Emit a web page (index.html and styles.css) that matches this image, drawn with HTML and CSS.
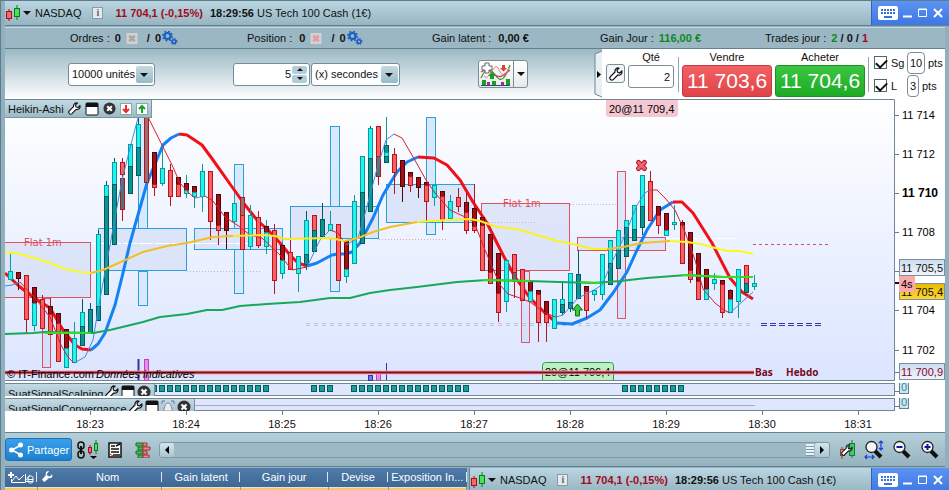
FILE: index.html
```
<!DOCTYPE html>
<html lang="fr">
<head>
  <meta charset="UTF-8" />
  <meta name="viewport" content="width=device-width, initial-scale=1.0"/>
  <title>NASDAQ - US Tech 100 Cash (1€)</title>
  <link rel="stylesheet" href="styles.css">
</head>
<body>
  <svg class="defs" width="0" height="0">
    <symbol id="candles" viewBox="0 0 17 17">
      <path d="M4 4v12" stroke="#a01018"/><rect x="1.5" y="6.500" width="5" height="7" fill="#f46a6a" stroke="#a01018"/>
      <path d="M12 0v15" stroke="#087a18"/><rect x="9.500" y="3.500" width="5" height="8" fill="#4ee05c" stroke="#087a18"/>
    </symbol>
    <symbol id="wrench" viewBox="0 0 14 14">
      <path d="M12.800 4 10.800 6 8.700 5.300 8 3.200 10 1.200C8 .4 5.600 2 6 5L1.200 9.800C0 11.500 2 14 4 12.800L8.800 8C11.500 8.500 13.600 6.300 12.800 4Z" fill="#fff" stroke="#111" stroke-width="1.200"/>
    </symbol>
    <symbol id="gears" viewBox="0 0 16 14">
      <circle cx="5.500" cy="5" r="3" fill="none" stroke="#1c5fc4" stroke-width="2.200"/>
      <circle cx="5.500" cy="5" r="4.600" fill="none" stroke="#1c5fc4" stroke-width="1.600" stroke-dasharray="1.800 1.800"/>
      <circle cx="12" cy="10.500" r="1.800" fill="none" stroke="#1c5fc4" stroke-width="1.500"/>
      <circle cx="12" cy="10.500" r="2.900" fill="none" stroke="#1c5fc4" stroke-width="1.200" stroke-dasharray="1.200 1.100"/>
    </symbol>
    <symbol id="cross" viewBox="0 0 12 12">
      <rect width="12" height="12" fill="#d2d2d0"/><path d="M3 3l6 6M9 3l-6 6" stroke="currentColor" stroke-width="3"/>
    </symbol>
    <symbol id="win" viewBox="0 0 14 14">
      <rect x="1" y="1" width="12" height="12" rx="1" fill="#fff" stroke="#111"/><path d="M1 1h12v4H1z" fill="#111"/>
    </symbol>
    <symbol id="close" viewBox="0 0 14 14">
      <circle cx="7" cy="7" r="6.500" fill="#333"/><path d="M4.500 4.500l5 5M9.500 4.500l-5 5" stroke="#fff" stroke-width="2.200"/>
    </symbol>
    <symbol id="keyboard" viewBox="0 0 20 14">
      <rect width="20" height="14" rx="2" fill="#fff"/>
      <path d="M3 4h14M3 7h14" stroke="#3c72dc" stroke-width="2" stroke-dasharray="2 1"/><path d="M6 11h8" stroke="#3c72dc" stroke-width="2"/>
    </symbol>
    <symbol id="lens" viewBox="0 0 20 20">
      <path d="M11 11l6 6" stroke="#111" stroke-width="4"/><circle cx="7.500" cy="7" r="5.500" fill="#f2f6f8" stroke="#222" stroke-width="1.300"/>
    </symbol>
  </svg>

  <div class="window">
    <header class="titlebar">
      <svg class="ic-candles"><use href="#candles"/></svg>
      <i class="caret"></i>
      <span class="name">NASDAQ</span>
      <button class="info" aria-label="Info">i</button>
      <b class="quote">11 704,1 (-0,15%)</b>
      <b class="clock">18:29:56</b>
      <span>US Tech 100 Cash (1€)</span>
      <div class="controls">
        <button aria-label="Clavier"><svg width="20" height="14"><use href="#keyboard"/></svg></button>
        <button aria-label="Réduire"><svg width="10" height="10"><path d="M0 8.500h9" stroke="#fff" stroke-width="2"/></svg></button>
        <button aria-label="Agrandir"><svg width="10" height="10"><path d="M.5 1h8v7.500h-8zM0 1.500h9" fill="none" stroke="#fff"/></svg></button>
        <button aria-label="Fermer"><svg width="10" height="10"><path d="M1 1l8 8M9 1L1 9" stroke="#fff" stroke-width="2"/></svg></button>
      </div>
    </header>

    <div class="status">
      <div class="stat"><span>Ordres :</span><b>0</b><svg class="x gray"><use href="#cross"/></svg><b>/</b><b>0</b><svg class="gears"><use href="#gears"/></svg></div>
      <div class="stat"><span class="wide">Position :</span><b>0</b><svg class="x pink"><use href="#cross"/></svg><b>/</b><b>0</b><svg class="gears"><use href="#gears"/></svg></div>
      <div class="stat"><span class="wide">Gain latent :</span><b>0,00 €</b></div>
      <div class="stat"><span>Gain Jour :</span><b class="green">116,00 €</b></div>
      <div class="stat"><span>Trades jour :</span><b><b class="green">2</b> / 0 / <b class="red">1</b></b></div>
    </div>

    <div class="toolbar">
      <div class="settings">
        <div class="select units"><select aria-label="Unités"><option>10000 unités</option></select></div>
        <div class="pair">
          <div class="spin">
            <input type="text" value="5" aria-label="Période">
            <div class="steps"><button aria-label="Plus"><i class="up"></i></button><button aria-label="Moins"><i class="down"></i></button></div>
          </div>
          <div class="select secs"><select aria-label="Intervalle"><option>(x) secondes</option></select></div>
        </div>
        <button class="indicators" aria-label="Indicateurs">
          <svg width="34" height="26" viewBox="0 0 34 26">
            <path d="M2 17C8 4 12 8 17 15S26 18 31 4" fill="none" stroke="#1a9a28" stroke-width="1.200"/>
            <path d="M2 11C9 6 12 12 16 14C21 18 25 14 31 9" fill="none" stroke="#d83848" stroke-width="1.200"/>
            <path d="M5 15C10 22 15 0 19 7S25 20 30 7" fill="none" stroke="#e77884"/>
            <path d="M6 2h4v3h3v4h-3v3H6V9H3V5h3z" fill="#fff" stroke="#667"/>
            <path d="M23 4h3v3h2l-3.500 3.500L21 7h2z" fill="#e23b3b"/><path d="M11 18v-3H9l4-4 4 4h-2v3z" fill="#14a020"/>
            <path d="M3 19h4v5H3zM13 20h4v4h-4zM27 18h4v6h-4z" fill="#14a020"/><path d="M8 21h3v3H8zM22 21h3v3h-3z" fill="#c02080"/><path d="M2 24.500h29" stroke="#28468c"/>
          </svg>
          <span class="drop"><i class="caret"></i></span>
        </button>
      </div>

      <div class="order">
        <svg class="handle" width="8" height="48"><path d="M8 1L1 4v40l7 3" fill="#e8f0f4" stroke="#6c8794"/><path d="M3 21v7l4-3.500z"/></svg>
        <button class="tool" aria-label="Réglages"><svg width="14" height="14"><use href="#wrench"/></svg></button>
        <div class="field"><label for="qty">Qté</label><input id="qty" type="text" value="2"></div>
        <div class="deal first"><span>Vendre</span><button class="sell">11 703,6</button></div>
        <div class="deal"><span>Acheter</span><button class="buy">11 704,6</button></div>
        <div class="limits">
          <div><input type="checkbox" id="sg" checked><label for="sg">Sg</label><input type="text" value="10" class="two" aria-label="Points Sg"><span>pts</span></div>
          <div><input type="checkbox" id="l" checked><label for="l">L</label><input type="text" value="3" class="one" aria-label="Points L"><span>pts</span></div>
        </div>
      </div>
    </div>

    <main class="charts">
      <div class="price">
        <svg id="chart" viewBox="5 99 940 283">
          <defs>
            <linearGradient id="sky" x1="0" y1="0" x2="0" y2="1"><stop offset="0" stop-color="#fff"/><stop offset="1" stop-color="#dbe5ff"/></linearGradient>
            <linearGradient id="gold" x1="0" y1="0" x2="0" y2="1"><stop offset="0" stop-color="#e9b800"/><stop offset="1" stop-color="#ffd83a"/></linearGradient>
            <linearGradient id="tag" x1="0" y1="0" x2="0" y2="1"><stop offset="0" stop-color="#ccdcf0"/><stop offset="1" stop-color="#f0f5fc"/></linearGradient>
          </defs>
          <rect x="5" y="99" width="889" height="281" fill="url(#sky)"/>
          <path d="M5 99.500H894.500V380.500H5" fill="none" stroke="#6f8794"/>
          <g id="plot"></g>
          <g id="axis"></g>
        </svg>
        <div class="tab main">
          <span>Heikin-Ashi</span>
          <svg width="13" height="13"><use href="#wrench"/></svg>
          <svg width="14" height="14"><use href="#win"/></svg>
          <svg width="13" height="13"><use href="#close"/></svg>
          <svg width="12" height="12"><rect x=".5" y=".5" width="11" height="11" fill="#fff" stroke="#8aa"/><path d="M6 2v7M3 6l3 3 3-3" fill="none" stroke="#e03030" stroke-width="2"/></svg>
          <svg width="12" height="12"><rect x=".5" y=".5" width="11" height="11" fill="#fff" stroke="#8aa"/><path d="M6 10V3M3 6l3-3 3 3" fill="none" stroke="#18a028" stroke-width="2"/></svg>
        </div>
      </div>
      <div class="signal">
        <svg id="scalping" viewBox="5 383 940 13"></svg>
        <div class="tab">
          <span>SuatSignalScalping</span>
          <svg width="14" height="14"><use href="#wrench"/></svg>
          <svg width="14" height="14"><use href="#win"/></svg>
          <svg width="14" height="14"><use href="#close"/></svg>
        </div>
      </div>
      <div class="signal">
        <svg id="convergence" viewBox="5 398 940 13"></svg>
        <div class="tab">
          <span>SuatSignalConvergance</span>
          <svg width="14" height="14"><use href="#wrench"/></svg>
          <svg width="14" height="14"><use href="#win"/></svg>
          <svg width="14" height="14"><path d="M2 11c2-1 1-8 5-8s3 7 5 8z" fill="#e8eef2" stroke="#889"/><path d="M1 4V1h3M10 1h3v3" fill="none" stroke="#67a"/><path d="M5 12h4" stroke="#c44" stroke-width="2"/></svg>
          <svg width="14" height="14"><use href="#close"/></svg>
        </div>
      </div>
      <div class="times">
        <span>18:23</span><span>18:24</span><span>18:25</span><span>18:26</span><span>18:27</span><span>18:28</span><span>18:29</span><span>18:30</span><span>18:31</span>
      </div>
    </main>

    <div class="footer">
      <button class="share"><svg width="16" height="16"><path d="M13 3L4 8l9 5" fill="none" stroke="#fff" stroke-width="1.500"/><circle cx="12.500" cy="3" r="2.500" fill="#fff"/><circle cx="3.500" cy="8" r="2.500" fill="#fff"/><circle cx="12.500" cy="13" r="2.500" fill="#fff"/></svg>Partager</button>
      <svg width="24" height="20" viewBox="0 0 24 20">
        <g fill="none" stroke="#111"><rect x="2" y="2" width="6" height="7" rx="3" stroke-width="1.500"/><rect x="2" y="11" width="6" height="7" rx="3" stroke-width="1.500"/><path d="M5 6v8" stroke-width="2"/></g>
        <path d="M14 5v10" stroke="#a01018"/><rect x="12.500" y="7.500" width="3" height="5" fill="#f46a6a" stroke="#a01018"/>
        <path d="M20 0v14" stroke="#087a18"/><rect x="18.500" y="3.500" width="3" height="7" fill="#4ee05c" stroke="#087a18"/><path d="M14 16h7l-3.500 3z"/>
      </svg>
      <svg width="14" height="16"><rect x="1" y="1" width="12" height="14" fill="#fff" stroke="#111" stroke-width="1.500"/><path d="M3 4h4M8 4l4-2M3 7h8M3 10h8M5 13h7" stroke="#111" stroke-width="1.600"/><path d="M2 12l3 2" stroke="#c22"/></svg>
      <svg class="book" width="16" height="16"><path d="M1 1h7v3H1zM3 5h5v3H3zM1 9h7v3H1zM3 13h5v3H3z" fill="#50b858" stroke="#1f6f28"/><path d="M8 1h4v3H8zM8 5h7v3H8zM8 9h4v3H8zM8 13h6v3H8z" fill="#f08a8a" stroke="#a03038"/></svg>
      <div class="scroll">
        <button class="left" aria-label="Gauche"><svg width="6" height="8"><path d="M5 0v8L1 4z"/></svg></button>
        <span class="grip"></span>
        <button class="right" aria-label="Droite"><svg width="6" height="8"><path d="M1 0v8l4-4z"/></svg></button>
      </div>
      <svg width="17" height="19" viewBox="0 0 17 19"><path d="M3 7v12" stroke="#843"/><rect x="1.500" y="9.500" width="4" height="6" fill="#e99" stroke="#843"/><path d="M13 0v18" stroke="#175"/><rect x="10.500" y="3.500" width="5" height="12" fill="#4c5" stroke="#175"/><use href="#wrench" x="2" y="4" width="12" height="12"/></svg>
      <svg width="20" height="20"><use href="#lens"/><path d="M17 1v9M15 3l2-2 2 2M15 8l2 2 2-2M1 17h9M3 15l-2 2 2 2M8 15l2 2-2 2" fill="none" stroke="#1440e0" stroke-width="1.200"/></svg>
      <svg width="20" height="20"><use href="#lens"/><path d="M4.500 7h6" stroke="#1414a0" stroke-width="2"/></svg>
      <svg width="20" height="20"><use href="#lens"/><path d="M4.500 7h6M7.500 4v6" stroke="#1414a0" stroke-width="2"/></svg>
    </div>

    <div class="bottom">
      <table class="positions">
        <thead>
          <tr>
            <th class="c-ico"><svg width="26" height="12"><path d="M3 0v6M0 3h6" stroke="#fff" stroke-width="2"/><path d="M3.500 7v3.500h14V2M4 9l4-5 3 4 5-5M17 9l5-6" fill="none" stroke="#fff"/><path d="M20 5.500c0-2 5-2 5 0v4c0 2-5 2-5 0zM20 7.500h5M18 9.500h7" fill="none" stroke="#fff"/></svg></th>
            <th class="c-nom"><svg width="11" height="11" viewBox="0 0 14 14"><path d="M13 4l-3 3-3-1-1-2 3-4C6 0 4 2 5 5L0 11l3 3 6-5c3 1 5-2 4-5z" fill="#fff"/></svg>Nom</th>
            <th class="c-lat">Gain latent</th><th class="c-jour">Gain jour</th><th class="c-dev">Devise</th><th class="c-expo">Exposition In...</th>
          </tr>
        </thead>
        <tbody><tr><td></td><td></td><td></td><td></td><td></td><td></td></tr></tbody>
      </table>
      <header class="titlebar second">
        <svg class="ic-candles"><use href="#candles"/></svg>
        <i class="caret"></i>
        <span class="name">NASDAQ</span>
        <button class="info" aria-label="Info">i</button>
        <b class="quote">11 704,1 (-0,15%)</b>
        <b class="clock">18:29:56</b>
        <span>US Tech 100 Cash (1€)</span>
        <div class="controls">
          <button aria-label="Clavier"><svg width="20" height="14"><use href="#keyboard"/></svg></button>
          <button aria-label="Réduire"><svg width="10" height="10"><path d="M0 8.500h9" stroke="#fff" stroke-width="2"/></svg></button>
          <button aria-label="Agrandir"><svg width="10" height="10"><path d="M.5 1h8v7.500h-8zM0 1.500h9" fill="none" stroke="#fff"/></svg></button>
          <button aria-label="Fermer"><svg width="10" height="10"><path d="M1 1l8 8M9 1L1 9" stroke="#fff" stroke-width="2"/></svg></button>
        </div>
      </header>
    </div>
  </div>

  <script src="chart.js"></script>
</body>
</html>
```
FILE: styles.css
```
* {
  box-sizing: border-box;
}

body {
  margin: 0;
  height: 100vh;
  overflow: hidden;
  background-color: #90b0be;
  font-family: "Liberation Sans", Arial, sans-serif;
  font-size: 11px;
  line-height: 14px;
  color: #111;
}

button,
input,
select {
  font: inherit;
  color: inherit;
  margin: 0;
  padding: 0;
}

svg {
  display: block;
  flex: none;
}

.defs {
  position: absolute;
}

.window {
  border-top: 1px solid #5e7d8b;
  border-left: 1px solid #5e7d8b;
  padding: 0 4px;
}

.titlebar {
  display: flex;
  align-items: center;
  height: 25px;
  margin-right: -4px;
  background: linear-gradient(#b9d6e2, #97b5c1);
  border-bottom: 1px solid #65818e;
  white-space: nowrap;
}

.ic-candles {
  width: 17px;
  height: 17px;
  margin-right: 1px;
}

.caret {
  width: 0;
  height: 0;
  border: 4px solid transparent;
  border-top: 4px solid #111;
  border-bottom: 0;
}

.name {
  margin-left: 4px;
}

.info {
  width: 11px;
  height: 12px;
  margin: 0 12px 0 11px;
  border: 1px solid #8a9ba3;
  background-color: #e4e9eb;
  font: bold 10px/10px "Liberation Serif", serif;
  color: #667;
}

.quote {
  color: #a00a1e;
  margin-right: 7px;
}

.clock {
  margin-right: 3px;
}

.controls {
  display: flex;
  align-items: center;
  gap: 5px;
  align-self: stretch;
  margin-left: auto;
  width: 78px;
  padding-left: 6px;
  background: linear-gradient(#5b93f2, #3f77e4);
  border-left: 1px solid #3560b8;
}

.controls button {
  border: none;
  background: none;
}

.status {
  display: grid;
  grid-template-columns: 177fr 185fr 168fr 165fr 180fr;
  align-items: center;
  height: 22px;
  margin-top: 1px;
  padding-left: 65px;
  background-color: #9ab7c3;
  border-top: 1px solid #c4dae2;
  border-bottom: 1px solid #65818e;
}

.stat {
  display: flex;
  align-items: center;
  gap: 5px;
}

.stat .wide {
  margin-right: 2px;
}

.x {
  width: 12px;
  height: 11px;
  margin-right: 4px;
}

.x.gray {
  color: #a9a9a9;
}

.x.pink {
  color: #e59ca6;
}

.gears {
  width: 16px;
  height: 14px;
  margin-left: -4px;
}

.green {
  color: #0a8a1c;
}

.red {
  color: #a00a1e;
}

.toolbar {
  display: flex;
  align-items: center;
  justify-content: space-between;
  height: 50px;
  padding-left: 63px;
  background: linear-gradient(#9cb9c5, #fff);
}

.settings {
  display: flex;
  align-items: center;
  gap: 78px;
}

.select {
  position: relative;
  height: 23px;
}

.units {
  width: 87px;
}

.secs {
  width: 89px;
}

.select select {
  appearance: none;
  width: 100%;
  height: 100%;
  padding: 0 3px;
  border: 1px solid #6f8d9b;
  border-radius: 3px;
  background-color: #fff;
}

.select::before {
  content: "";
  position: absolute;
  right: 2px;
  top: 3px;
  width: 17px;
  height: 17px;
  border-radius: 2px;
  background: linear-gradient(#c4d9e2, #98bac8);
  pointer-events: none;
}

.select::after {
  content: "";
  position: absolute;
  right: 7px;
  top: 10px;
  border: 4px solid transparent;
  border-top: 4px solid #111;
  border-bottom: 0;
  pointer-events: none;
}

.pair {
  display: flex;
  gap: 1px;
}

.spin {
  display: flex;
  width: 77px;
  height: 23px;
  padding: 2px;
  border: 1px solid #6f8d9b;
  border-radius: 3px;
  background-color: #fff;
}

.spin input {
  flex: 1;
  min-width: 0;
  border: none;
  background: none;
  text-align: right;
}

.steps {
  display: flex;
  flex-direction: column;
  gap: 1px;
  width: 15px;
  margin-left: 1px;
}

.steps button {
  flex: 1;
  display: flex;
  align-items: center;
  justify-content: center;
  border: none;
  border-radius: 2px;
  background-color: #b2cdd8;
}

.up,
.down {
  border: 3px solid transparent;
}

.up {
  border-bottom-color: #111;
  border-top: 0;
}

.down {
  border-top-color: #111;
  border-bottom: 0;
}

.indicators {
  display: flex;
  width: 50px;
  height: 28px;
  border: 1px solid #7b8e97;
  border-radius: 3px;
  background: linear-gradient(#fff, #e6eaec);
}

.drop {
  display: flex;
  align-items: center;
  justify-content: center;
  flex: 1;
  height: 100%;
  border-left: 1px solid #7b8e97;
}

.order {
  display: flex;
  align-items: flex-start;
  align-self: stretch;
  flex: none;
  width: 351px;
  padding-top: 1px;
  background: linear-gradient(90deg, transparent 8px, #fff 8px);
}

.tool {
  display: flex;
  align-items: center;
  justify-content: center;
  width: 19px;
  height: 19px;
  margin: 14px 3px 0 4px;
  border: 1px solid #7b8e97;
  border-radius: 3px;
  background-color: #f2f4f5;
}

.field,
.deal {
  display: flex;
  flex-direction: column;
  align-items: center;
  gap: 1px;
}

.field input {
  width: 46px;
  height: 23px;
  padding-right: 3px;
  border: 1px solid #7b8e97;
  border-radius: 3px;
  text-align: right;
}

.deal {
  margin-left: 3px;
}

.deal.first {
  margin-left: 8px;
  position: relative;
}

.deal.first::before {
  content: "";
  position: absolute;
  left: -4px;
  top: 7px;
  height: 35px;
  border-left: 1px solid #90a5b0;
}

.deal button {
  width: 90px;
  height: 32px;
  border-radius: 3px;
  font-size: 21px;
  color: #fff;
  white-space: nowrap;
}

.sell {
  border: 1px solid #c23c40;
  background: linear-gradient(#f26165, #df4448);
}

.buy {
  border: 1px solid #1c8f28;
  background: linear-gradient(#3cc540, #1dab26);
}

.limits {
  margin: 7px 0 0 3px;
  padding-left: 5px;
  height: 35px;
  border-left: 1px solid #90a5b0;
}

.limits div {
  display: flex;
  align-items: center;
  height: 23px;
  margin-top: -6px;
  white-space: nowrap;
}

.limits div + div {
  margin-top: 0;
}

.limits label {
  width: 16px;
  margin-left: 4px;
}

.limits input[type="checkbox"] {
  appearance: none;
  width: 13px;
  height: 13px;
  border: 1px solid #4f6570;
  background-color: #fff;
}

.limits input[type="checkbox"]:checked::before {
  content: "";
  display: block;
  width: 9px;
  height: 5px;
  margin: 2px 1px;
  border-left: 2px solid #111;
  border-bottom: 2px solid #111;
  transform: rotate(-45deg);
}

.limits input[type="text"] {
  height: 22px;
  margin-right: 3px;
  border: 1px solid #7b8e97;
  border-radius: 4px;
  text-align: center;
}

.two {
  width: 18px;
}

.one {
  width: 12px;
}

.charts {
  background-color: #fff;
}

.price,
.signal {
  position: relative;
  overflow: hidden;
}

.price svg#chart,
.signal > svg {
  width: 100%;
  height: auto;
}

.signal {
  margin-top: 1px;
}

.signal + .signal {
  margin-top: 2px;
}

.tab {
  position: absolute;
  left: 0;
  top: 1px;
  display: flex;
  gap: 3px;
  height: 18px;
  padding: 1px 3px;
  background: linear-gradient(#c2dae3, #9dbac6);
  border-right: 1px solid #7894a1;
  white-space: nowrap;
}

.signal .tab {
  gap: 2px;
}

.tab span {
  padding-top: 2px;
}

.tab.main {
  align-items: center;
  gap: 4px;
  border-bottom: 1px solid #7894a1;
}

.tab.main span {
  padding: 0;
}

.times {
  display: grid;
  grid-template-columns: repeat(9, 96fr) 39fr;
  height: 22px;
  padding-left: 37px;
  border-bottom: 1px solid #65818e;
  text-align: center;
}

.times span::before {
  content: "";
  display: block;
  width: 1px;
  height: 4px;
  margin: 0 auto 2px;
  background-color: #65818e;
}

.footer {
  display: flex;
  align-items: center;
  gap: 8px;
  height: 34px;
  padding: 0 5px 0 0;
  background: linear-gradient(#b6d0da, #94b2be);
  border-bottom: 1px solid #65818e;
}

.share {
  display: flex;
  align-items: center;
  gap: 3px;
  width: 67px;
  height: 23px;
  padding-left: 2px;
  margin-right: -4px;
  border: 1px solid #1b70b8;
  border-radius: 3px;
  background: linear-gradient(#3ba0e8, #1c80d0);
  color: #fff;
}

.book {
  margin-left: 5px;
}

.scroll {
  display: flex;
  flex: 1;
  height: 16px;
  margin-right: 1px;
  border: 1px solid #7c99a6;
  border-radius: 3px;
  background-color: #9cb9c5;
}

.scroll button {
  display: flex;
  align-items: center;
  justify-content: center;
  width: 14px;
  border: none;
  border-radius: 2px;
  background: linear-gradient(#d5e5ec, #a9c6d2);
}

.grip {
  width: 8px;
  margin: 1px 1px 1px auto;
  background: repeating-linear-gradient(#e9f3f7 0 2px, #7c99a6 2px 3px);
}

.bottom {
  display: grid;
  grid-template-columns: 462fr 476fr;
  align-items: start;
  gap: 2px;
  margin-top: 1px;
}

.positions {
  border-collapse: collapse;
  table-layout: fixed;
  width: 100%;
  color: #fff;
}

.positions th {
  height: 19px;
  padding: 0;
  font-weight: normal;
  white-space: nowrap;
  background: linear-gradient(90deg, transparent calc(100% - 1px), #dce8f2 0) no-repeat 0 4px / 100% 10px, linear-gradient(#4f7bab, #3f6792);
}

.positions th svg {
  float: left;
  margin: 1px 0 0 5px;
}

.positions .c-ico svg {
  margin-left: 3px;
}

.positions td {
  height: 20px;
  background-color: #fbc46a;
  border-right: 1px solid #8b9aa0;
  border-top: 1px solid #dbe4e8;
}

.c-ico {
  width: 7%;
}

.c-nom {
  width: 27%;
}

.c-lat {
  width: 17%;
}

.c-jour {
  width: 19%;
}

.c-dev {
  width: 13%;
}

.titlebar.second {
  border-left: 1px solid #65818e;
}
```
FILE: chart.js
```
const plot = document.getElementById("plot");
const axis = document.getElementById("axis");

const colors = {
  c: ["#20f4f0", "#0a9a9c"],
  t: ["#0b9494", "#06585c"],
  r: ["#fb6060", "#b51420"],
  d: ["#a80c14", "#4c0508"],
  g: ["#9b6c70", "#b51420"],
  k: ["#4f7474", "#b51420"]
};

function add(parent, tag, attrs, text) {
  const el = document.createElementNS("http://www.w3.org/2000/svg", tag);
  for (const key in attrs) el.setAttribute(key, attrs[key]);
  if (text) el.textContent = text;
  parent.appendChild(el);
  return el;
}

function line(points, stroke, width, dash) {
  add(plot, "polyline", { points, fill: "none", stroke, "stroke-width": width, "stroke-linejoin": "round", "stroke-dasharray": dash || "none" });
}

function box(x1, y1, x2, y2, stroke, fill) {
  add(plot, "rect", { x: x1 + 0.5, y: y1 + 0.5, width: x2 - x1, height: y2 - y1, stroke, fill });
}

// zones: left, top, right, bottom
const blue = "#28a0d8";
const red = "#dc5464";
[[138, 112, 147, 228], [138, 271, 147, 305], [234, 164, 243, 228], [234, 249, 243, 293], [330, 126, 339, 206],
 [330, 238, 339, 291], [426, 117, 435, 234]].forEach(b => box(...b, blue, "#d9e8fc"));
[[98, 228, 186, 270], [194, 228, 282, 249], [290, 206, 378, 238], [386, 184, 474, 222]].forEach(b => box(...b, blue, "#dce4fa"));
[[4, 242, 90, 297], [481, 203, 569, 270], [577, 237, 665, 250], [617, 171, 625, 318], [42, 298, 50, 367], [521, 271, 529, 342]]
  .forEach(b => box(...b, red, "rgba(205,215,246,0.5)"));

// dotted levels
line("187,271.5 262,271.5", "#b4b8d4", 1, "1 2");
line("91,243.500 283,243.500", "#fff", 1, "14 2");
line("379,239.500 446,239.500", "#e0a0c8", 1, "1 2");
line("474,222.500 535,222.500", "#c0bcd8", 1, "1 2");
line("570,204.500 617,204.500", "#c0bcd8", 1, "1 2");
line("666,238.500 735,238.500", "#fff", 1, "10 2");
line("306,323.500 753,323.500", "#c5c0d8", 1, "4 4");
line("306,325.500 753,325.500", "#c5c0d8", 1, "4 4");
line("761,323.500 822,323.500", "#3434b4", 1, "6 3");
line("761,325.500 822,325.500", "#3434b4", 1, "6 3");
line("753,244.500 828,244.500", "#d05070", 1, "3 3");

// x, wick top, wick bottom, then body: top, colour, bottom [, colour, bottom]
const candles = [
  [10, 253, 279, 271, "c", 279], [18, 272, 290, 272, "d", 278], [26, 275, 333, 275, "r", 319],
  [34, 287, 331, 287, "d", 303, "c", 325], [42, 295, 328, 299, "r", 328], [50, 298, 334, 306, "d", 314, "r", 334],
  [58, 313, 361, 313, "d", 323, "r", 361], [66, 329, 367, 329, "d", 348, "c", 367], [74, 322, 362, 338, "c", 362],
  [82, 299, 345, 312, "c", 326, "t", 345], [90, 303, 333, 309, "t", 333], [98, 230, 320, 234, "c", 306, "t", 320],
  [106, 181, 294, 185, "c", 196, "t", 294], [114, 158, 244, 162, "c", 184, "t", 244], [122, 158, 178, 162, "r", 174],
  [122, 178, 221, 178, "k", 209], [130, 144, 193, 144, "c", 166, "t", 193], [138, 118, 175, 124, "c", 147, "t", 175],
  [146, 110, 182, 112, "g", 182], [154, 152, 196, 152, "d", 184, "r", 187], [162, 147, 186, 168, "c", 183],
  [170, 164, 206, 170, "r", 196], [178, 177, 196, 177, "d", 184, "r", 196], [186, 175, 198, 183, "d", 190, "c", 193],
  [194, 186, 208, 186, "d", 192, "c", 196], [202, 164, 212, 171, "c", 196], [210, 171, 240, 171, "r", 221],
  [218, 194, 245, 194, "d", 225, "r", 230], [226, 212, 249, 212, "d", 230], [234, 203, 221, 203, "c", 221],
  [242, 197, 249, 197, "g", 215, "r", 249], [250, 205, 250, 215, "c", 246], [258, 211, 248, 217, "r", 245],
  [266, 220, 254, 226, "d", 232, "c", 246], [274, 224, 294, 230, "r", 280], [282, 245, 279, 245, "d", 260, "c", 273],
  [290, 240, 269, 252, "r", 269], [298, 256, 292, 256, "c", 273], [306, 211, 270, 220, "c", 254, "t", 264],
  [314, 215, 251, 215, "r", 230, "t", 251], [322, 203, 236, 219, "t", 236], [330, 211, 230, 224, "c", 230],
  [338, 224, 280, 224, "r", 280], [346, 241, 283, 241, "d", 269, "c", 276], [354, 195, 263, 201, "c", 263],
  [362, 156, 243, 156, "c", 192, "t", 243], [370, 126, 211, 128, "c", 158, "t", 211], [378, 126, 185, 126, "r", 156, "k", 176],
  [386, 117, 162, 145, "t", 152, "c", 156], [386, 156, 162, 156, "t", 162], [394, 148, 194, 154, "r", 172],
  [402, 160, 202, 160, "d", 186], [410, 172, 192, 172, "d", 176, "r", 185], [418, 177, 198, 177, "d", 187],
  [426, 182, 222, 182, "d", 185, "r", 201], [434, 185, 206, 185, "c", 197], [442, 191, 230, 191, "d", 196, "r", 220],
  [450, 195, 218, 201, "c", 218], [458, 188, 212, 197, "r", 206], [466, 192, 234, 202, "d", 212, "r", 230],
  [474, 184, 233, 208, "d", 226, "r", 230], [482, 217, 270, 217, "d", 225, "r", 270], [490, 234, 283, 234, "d", 272, "r", 283],
  [498, 253, 322, 253, "d", 293, "r", 312], [506, 260, 312, 260, "c", 301], [514, 254, 298, 254, "r", 272, "k", 281],
  [522, 269, 300, 269, "r", 300], [530, 281, 301, 281, "d", 291, "c", 301], [538, 290, 342, 290, "d", 294, "r", 322],
  [546, 301, 342, 301, "d", 314, "r", 322], [554, 299, 328, 299, "c", 328], [562, 281, 315, 299, "c", 304, "t", 312],
  [570, 273, 312, 273, "c", 302, "t", 308], [578, 250, 298, 274, "t", 298], [586, 286, 318, 286, "d", 291, "r", 310],
  [594, 290, 301, 290, "c", 294], [602, 254, 300, 254, "c", 294], [610, 240, 284, 240, "c", 263, "t", 284],
  [618, 230, 268, 230, "c", 250, "t", 268], [626, 220, 256, 220, "c", 227, "t", 256], [634, 205, 240, 205, "c", 229, "t", 240],
  [642, 175, 235, 175, "c", 206, "t", 227], [650, 171, 220, 181, "r", 220], [658, 206, 234, 206, "d", 215, "r", 225],
  [666, 213, 235, 213, "d", 230, "c", 235], [674, 205, 230, 222, "c", 224], [682, 220, 263, 222, "d", 225, "r", 263],
  [690, 232, 283, 232, "d", 270, "r", 279], [698, 253, 299, 253, "d", 281, "r", 299], [706, 269, 299, 269, "d", 289, "c", 299],
  [714, 273, 290, 279, "c", 283], [722, 280, 318, 280, "d", 284, "r", 312], [730, 289, 312, 290, "d", 299, "c", 312],
  [738, 269, 318, 269, "c", 301], [746, 265, 292, 265, "r", 283, "t", 292], [754, 275, 290, 283, "c", 286]
];

// thick average
line("5,273 20,287 33,297 50,308 63,330 75,345 82,349 91,350", "#f01018", 3);
line("91,350 98,344 105,333 115,305 123,273 130,243 147,183 163,145 171,138 179,134", "#1482f4", 3);
line("179,134 187,135 202,145 213,160 230,184 245,205 257,220 268,230 280,243 290,255 298,263 307,266", "#f01018", 3);
line("307,266 317,263 332,255 338,254 345,254 352,252 360,243 373,218 383,195 397,172 407,162 418,157", "#1482f4", 3);
line("418,157 434,158 447,165 460,180 473,202 487,223 503,255 515,277 530,298 547,315 556,322", "#f01018", 3);
line("556,323 572,324 587,318 600,310 613,293 627,272 637,250 647,230 660,210 673,202", "#1482f4", 3);
line("673,202 682,202 693,213 712,243 730,278 742,292 753,299", "#f01018", 3);

candles.forEach(([x, high, low, top, ...parts]) => {
  const main = parts[parts.length - 2];
  add(plot, "path", { d: `M${x + 0.5} ${high}V${low}`, stroke: colors[main][1] });
  for (let i = 0; i < parts.length; i += 2) {
    const [fill, stroke] = colors[parts[i]];
    add(plot, "rect", { x: x - 1.5, y: top + 0.5, width: 4, height: Math.max(parts[i + 1] - top, 1), fill, stroke });
    top = parts[i + 1];
  }
});

// fast average
const up = "#3c8ce0";
const down = "#d8202c";
line("5,286 12,285 20,282", up, 1);
line("20,282 34,297 50,317 61,345 68,357 74,363", down, 1);
line("74,363 85,357 93,340 98,310 110,245 122,180 130,148 138,118", up, 1);
line("148,117 162,145 172,165 180,183 190,194 195,198", down, 1);
line("195,198 205,196", up, 1);
line("205,196 213,201 225,217 240,227 250,235 262,238 280,255 292,270 307,267", down, 1);
line("307,267 320,240 330,230", up, 1);
line("330,230 338,233 346,245", down, 1);
line("346,245 358,238 366,210 378,165 386,140 394,134", up, 1);
line("394,134 402,138 412,155 426,180 435,193 450,210 463,216 474,222 485,250 500,285 508,294 520,298 530,302 545,313 556,317", down, 1);
line("556,317 563,315 578,298 594,290 602,285 612,262 625,235 637,205 645,193 650,190", up, 1);
line("650,190 657,190 665,198 675,210 685,232 695,260 703,289 715,303 724,310 730,313", down, 1);
line("730,313 742,302 753,292", up, 1);

// slow averages
line("5,334 33,333 45,332 93,333 110,330 143,322 160,317 187,314 207,310 222,310 240,306 267,304 300,302 330,298 350,298 370,293 390,290 417,287 457,282 487,280 527,281 560,282 593,283 620,281 647,278 687,275 723,277 753,277", "#18a858", 2);
["45,333 91,333", "483,280 530,281", "580,282 600,283", "682,275 723,277 753,277"].forEach(p => line(p, "#30e020", 2));
line("5,252 20,254 35,258 50,263 65,269 80,272 91,273", "#fafa20", 2);
line("91,273 103,270 123,261 143,252 167,246 187,243 213,237 233,236", "#f4be28", 2);
line("233,236 263,235 275,236 285,239 330,238 345,241", "#f8e822", 2);
line("345,241 358,238 373,232 390,227 417,222", "#f4be28", 2);
line("417,222 447,220 470,219 480,221 497,227 517,229 530,233 557,241 573,244 593,249 607,249", "#f8f420", 2);
line("607,249 623,247 642,243 670,241", "#f4be28", 2);
line("670,241 687,242 700,244 727,251 740,251 753,254", "#fafa20", 2);

// volume bars at the bottom
[[370, 375, "#7478f0", "#3434a0"], [378, 373, "#f088f0", "#b04ab0"], [146, 359, "#f088f0", "#b04ab0"]].forEach(([x, y, fill, stroke]) =>
  add(plot, "rect", { x: x - 1.5, y: y + 0.5, width: 4, height: 380 - y, fill, stroke }));
line("138.5,359 138.5,380", "#3434a0", 2);
line("386.5,363 386.5,380", "#3434a0", 1);

// order tags
add(plot, "path", { d: "M606 100H678V114Q678 117 675 117H609Q606 117 606 114Z", fill: "#f4c8d2" });
add(plot, "text", { x: 609, y: 113 }, "20@11 709,4");
add(plot, "path", { d: "M542.5 380V365.500Q542.500 362.500 545.500 362.500H610.500Q613.500 362.500 613.500 365.500V380", fill: "#bcf0c4", stroke: "#2c9c3c" });
add(plot, "text", { x: 545, y: 376 }, "20@11 706,4");
line("5,372.500 754,372.500", "#f0a0b0", 4);
line("5,372.500 754,372.500", "#880a18", 2);
add(plot, "path", { d: "M638.500 162.500l6 6M644.500 162.500l-6 6", stroke: "#a81c28", "stroke-width": 5, "stroke-linecap": "round" });
add(plot, "path", { d: "M638.500 162.500l6 6M644.500 162.500l-6 6", stroke: "#f46068", "stroke-width": 3, "stroke-linecap": "round" });
add(plot, "path", { d: "M577.500 304l5 6h-3v6h-4v-6h-3z", fill: "#38cc38", stroke: "#147018" });

add(plot, "text", { x: 24, y: 246, fill: "#e0505c", "font-family": "DejaVu Sans", "font-size": 10 }, "Flat 1m");
add(plot, "text", { x: 503, y: 207, fill: "#e0505c", "font-family": "DejaVu Sans", "font-size": 10 }, "Flat 1m");
add(plot, "text", { x: 755, y: 376, fill: "#780a18", "font-weight": "bold", "font-family": "Open Sans", "font-size": 10 }, "Bas");
add(plot, "text", { x: 786, y: 376, fill: "#780a18", "font-weight": "bold", "font-family": "Open Sans", "font-size": 10 }, "Hebdo");
add(plot, "text", { x: 7, y: 378 }, "© IT-Finance.com");
add(plot, "text", { x: 96, y: 378, "font-style": "italic" }, "Données indicatives");

// price scale
[[115, "11 714"], [154, "11 712"], [193, "11 710"], [232, "11 708"], [271, ""], [310, "11 704"], [350, "11 702"], [372, ""]].forEach(([y, label]) => {
  add(axis, "path", { d: `M895 ${y + 0.5}H899`, stroke: "#65818e" });
  const big = label === "11 710";
  add(axis, "text", { x: 902, y: y + 4, "font-size": big ? 12 : 11, "font-weight": big ? "bold" : "normal" }, label);
});
function priceTag(y, fill, color, label) {
  add(axis, "rect", { x: 899.5, y: y + 0.5, width: 45, height: 16, fill, stroke: "#7890a0" });
  add(axis, "text", { x: 901, y: y + 13, fill: color }, label);
}
priceTag(259, "url(#tag)", "#111", "11 705,5");
priceTag(283, "url(#gold)", "#111", "11 705,4");
priceTag(363, "url(#tag)", "#880a28", "11 700,9");
add(axis, "rect", { x: 899, y: 276, width: 16, height: 16, fill: "#fbaaac" });
add(axis, "text", { x: 901, y: 288 }, "4s");
add(axis, "path", { d: "M895 283H899", stroke: "#111", "stroke-width": 2 });

// signal strips
[["scalping", 383], ["convergence", 398]].forEach(([id, y]) => {
  const strip = document.getElementById(id);
  add(strip, "rect", { x: 4.5, y: y + 0.5, width: 890, height: 12, fill: "#dfe7ff", stroke: "#6f8794" });
  add(strip, "path", { d: `M895 ${y + 8}.5H899`, stroke: "#65818e" });
  add(strip, "rect", { x: 899.5, y: y - 0.5, width: 9, height: 11, fill: "#d3e4f0", stroke: "#65818e" });
  add(strip, "text", { x: 901, y: y + 8, fill: "#1890a8" }, "0");
});
const scalping = document.getElementById("scalping");
[[151, 264], [311, 328], [351, 464], [622, 679]].forEach(([from, to]) => {
  for (let x = from; x <= to; x += 8) {
    add(scalping, "rect", { x: x + 0.5, y: 385.5, width: 5, height: 6, fill: "#18a098", stroke: "#065c5c" });
  }
});
add(document.getElementById("convergence"), "path", { d: "M195 405.500H755", stroke: "#b4a0d8" });
```
